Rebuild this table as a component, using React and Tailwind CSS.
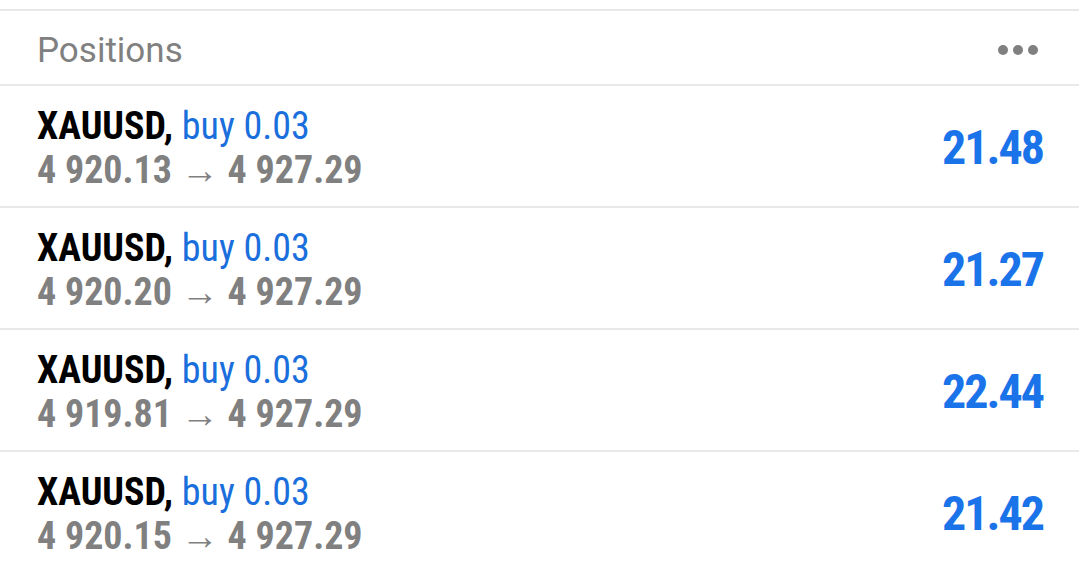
const positions = [
  { open: "4 920.13", profit: "21.48" },
  { open: "4 920.20", profit: "21.27" },
  { open: "4 919.81", profit: "22.44" },
  { open: "4 920.15", profit: "21.42" },
];

const cond = { fontFamily: '"Roboto Condensed", Roboto, "Liberation Sans", sans-serif' };

function Row({ open, profit }) {
  return (
    <div className="flex h-[122px] items-center justify-between border-b-2 border-[#e8e8e8] pl-[37px] pr-[36px]">
      <div className="pt-[4px] font-stretch-condensed" style={cond}>
        <div className="text-[38px] leading-[44px]">
          <span className="font-bold text-black">XAUUSD,</span>{" "}
          <span className="text-[#1a6fdc]">buy 0.03</span>
        </div>
        <div className="text-[38px] font-bold leading-[44px] text-[#808080]">
          {open} <span className="font-normal">→</span> 4 927.29
        </div>
      </div>
      <div className="pt-[3px] font-stretch-condensed text-[48px] font-bold tracking-[-2px] text-[#1a73e8]" style={cond}>
        {profit}
      </div>
    </div>
  );
}

export default function App() {
  return (
    <div className="h-[571px] w-[1079px] overflow-hidden bg-white pt-[9px]" style={{ fontFamily: "Roboto, sans-serif" }}>
      <div className="border-t-2 border-[#e8e8e8]" />
      <div className="flex h-[75px] items-center justify-between border-b-2 border-[#e8e8e8] pl-[37px] pr-[41px]">
        <span className="pt-[8px] text-[35px] text-[#808080]">Positions</span>
        <div className="flex gap-[5px] pt-[5px]">
          <span className="h-[10px] w-[10px] rounded-full bg-[#808080]" />
          <span className="h-[10px] w-[10px] rounded-full bg-[#808080]" />
          <span className="h-[10px] w-[10px] rounded-full bg-[#808080]" />
        </div>
      </div>
      {positions.map((p, i) => (
        <Row key={i} {...p} />
      ))}
    </div>
  );
}
